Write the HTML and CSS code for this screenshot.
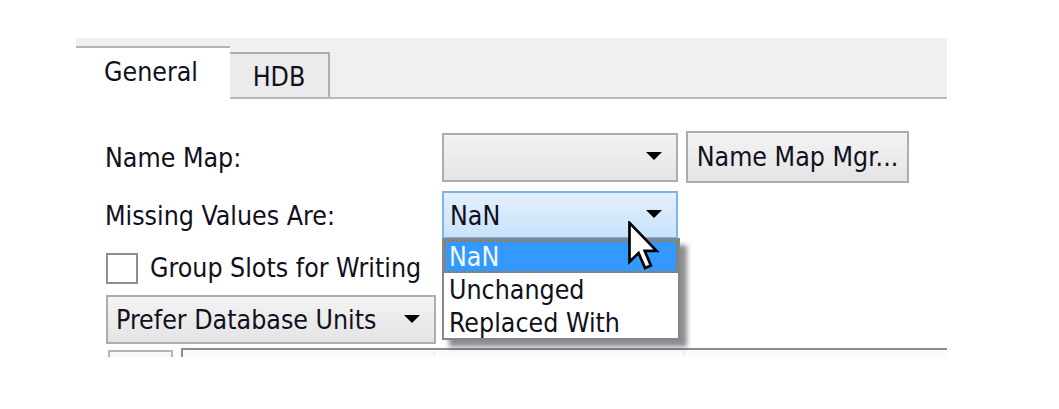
FILE: index.html
```html
<!DOCTYPE html>
<html>
<head>
<meta charset="utf-8">
<link rel="stylesheet" href="styles.css">
</head>
<body>
<div class="frame">
  <div class="tabstrip">
    <div class="tab active">General</div>
    <div class="tab">HDB</div>
  </div>
  <div class="content">
    <div class="row r1">
      <div class="label">Name Map:</div>
      <div class="combo c1"><span class="val"></span><span class="arrow"></span></div>
      <div class="button">Name Map Mgr...</div>
    </div>
    <div class="row r2">
      <div class="label">Missing Values Are:</div>
      <div class="combo c1 hot"><span class="val">NaN</span><span class="arrow"></span></div>
    </div>
    <div class="row r3">
      <span class="checkbox"></span>
      <span class="cblabel">Group Slots for Writing</span>
    </div>
    <div class="row r4">
      <div class="combo c2"><span class="val">Prefer Database Units</span><span class="arrow"></span></div>
    </div>
    <div class="row r5">
      <div class="smallbox"></div>
      <div class="bigbox">
        <span class="col col1"></span>
        <span class="col col2"></span>
      </div>
    </div>
  </div>
  <div class="popup">
    <div class="item sel">NaN</div>
    <div class="item">Unchanged</div>
    <div class="item">Replaced With</div>
  </div>
  <svg class="cursor" width="32" height="50" viewBox="0 0 13 20">
    <path d="M0.6 0.6 L0.6 16.4 L4.3 12.9 L6.9 18.9 L9.3 17.9 L6.8 12 L11.6 12 Z" fill="#fff" stroke="#000" stroke-width="1.1" stroke-linejoin="miter"/>
  </svg>
</div>
</body>
</html>
```

FILE: styles.css
```css
html, body {
  margin: 0;
  padding: 0;
  background: #ffffff;
}
body {
  font-family: "DejaVu Sans Condensed", "DejaVu Sans", sans-serif;
  font-size: 26.5px;
  color: #101020;
}
.frame {
  position: relative;
  margin: 38px 0 0 76px;
  width: 871px;
  height: 319px;
  overflow: hidden;
  background: #ffffff;
}
.tabstrip {
  height: 59px;
  background: #f0f0f0;
  border-bottom: 2px solid #b8b8b8;
  display: flex;
  align-items: flex-end;
}
.tab {
  box-sizing: border-box;
  display: flex;
  align-items: center;
  justify-content: center;
}
.tab.active {
  width: 154px;
  height: 53px;
  margin-bottom: -2px;
  background: #ffffff;
  border-top: 2px solid #b4b4b4;
  padding-bottom: 4px;
  padding-right: 4px;
}
.tab:not(.active) {
  width: 100px;
  height: 45px;
  background: #ebebeb;
  border: 2px solid #adadad;
  border-bottom: none;
  border-left: none;
  padding-top: 2px;
}
.content {
  padding: 32px 0 0 29px;
  display: flex;
  flex-direction: column;
}
.row {
  display: flex;
  align-items: center;
}
.label {
  width: 337px;
}
.r1 { height: 52px; }
.r2 { height: 48px; margin-top: 8px; }
.r3 { height: 32px; margin-top: 13px; padding-left: 1px; }
.r4 { height: 49px; margin-top: 11px; padding-left: 1px; }
.r5 { margin-top: 6px; align-items: flex-start; padding-left: 3px; }
.combo {
  box-sizing: border-box;
  display: flex;
  align-items: center;
  justify-content: space-between;
  border: 2px solid #adadad;
  background: linear-gradient(#f3f3f3, #e4e4e4);
  padding: 0 14px 0 6px;
}
.c1 {
  width: 236px;
  height: 49px;
}
.hot {
  height: 48px;
  border-color: #7eb4ea;
  background: linear-gradient(#e3f0fc, #c9e2fb);
}
.c2 {
  width: 330px;
  height: 49px;
  padding-left: 8px;
}
.arrow {
  width: 0;
  height: 0;
  border-left: 8px solid transparent;
  border-right: 8px solid transparent;
  border-top: 8px solid #000;
  margin-top: -2px;
}
.button {
  box-sizing: border-box;
  margin-left: 8px;
  width: 223px;
  height: 52px;
  border: 2px solid #adadad;
  background: linear-gradient(#f3f3f3, #e4e4e4);
  display: flex;
  align-items: center;
  justify-content: center;
  padding-bottom: 2px;
}
.checkbox {
  box-sizing: border-box;
  width: 32px;
  height: 31px;
  border: 2px solid #8e8f8f;
  background: #fff;
}
.cblabel {
  margin-left: 12px;
  padding-bottom: 2px;
}
.smallbox {
  box-sizing: border-box;
  width: 65px;
  height: 20px;
  border: 2px solid #b4b4b4;
  border-bottom: none;
  background: #f8f8f8;
}
.bigbox {
  box-sizing: border-box;
  margin-left: 8px;
  margin-top: -2px;
  flex: 1;
  height: 20px;
  border-top: 2px solid #8a8b94;
  border-left: 2px solid #8a8b94;
  background: #fbfbfb;
  position: relative;
}
.col {
  position: absolute;
  top: 0;
  width: 2px;
  height: 20px;
  background: #eaf2fb;
}
.col1 { left: 250px; }
.col2 { left: 500px; }
.popup {
  position: absolute;
  left: 366px;
  top: 200px;
  width: 238px;
  height: 102px;
  box-sizing: border-box;
  border: 2px solid #838791;
  background: #ffffff;
  box-shadow: 7px 7px 5px rgba(0, 0, 0, 0.45);
  padding: 0;
}
.item {
  height: 33px;
  line-height: 34px;
  padding-left: 5px;
  box-sizing: border-box;
}
.item.sel {
  background: #3399ff;
  color: #f4f8ff;
  border: 2px dotted #c8700c;
  padding-left: 3px;
  line-height: 30px;
}
.cursor {
  position: absolute;
  left: 552px;
  top: 183px;
}
```
